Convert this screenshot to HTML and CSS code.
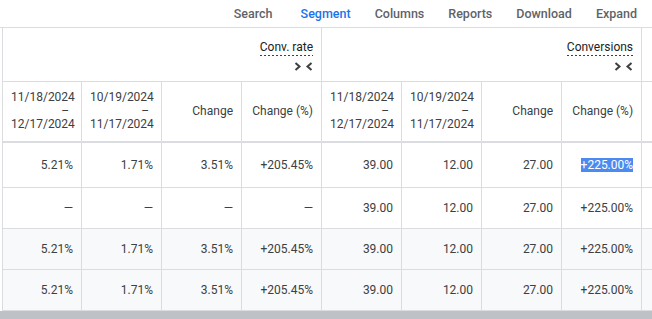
FILE: index.html
```html
<!DOCTYPE html>
<html lang="en">
<head>
    <meta charset="UTF-8">
    <meta name="viewport" content="width=device-width, initial-scale=1.0">
    <title>Report</title>
    <link rel="stylesheet" href="styles.css">
</head>
<body>
    <div class="toolbar">
        <a href="javascript:''" class="first">Search</a>
        <a href="javascript:''" class="active">Segment</a>
        <a href="javascript:''">Columns</a>
        <a href="javascript:''">Reports</a>
        <a href="javascript:''">Download</a>
        <a href="javascript:''">Expand</a>
    </div>

    <div class="grid_wrap">
        <table class="grid">
            <colgroup>
                <col class="c_first">
                <col class="c_num"><col class="c_num"><col class="c_num">
                <col class="c_num"><col class="c_num"><col class="c_num"><col class="c_num">
                <col class="c_rest">
            </colgroup>
            <thead>
                <tr class="group_row">
                    <th colspan="4">
                        <span class="metric">Conv. rate</span>
                        <span class="collapse">
                            <svg width="19" height="9" viewBox="0 0 19 9"><path d="M1.5 1l4 3.5-4 3.5M17.5 1l-4 3.5 4 3.5" fill="none" stroke="#3c4043" stroke-width="2"/></svg>
                        </span>
                    </th>
                    <th colspan="4">
                        <span class="metric">Conversions</span>
                        <span class="collapse">
                            <svg width="19" height="9" viewBox="0 0 19 9"><path d="M1.5 1l4 3.5-4 3.5M17.5 1l-4 3.5 4 3.5" fill="none" stroke="#3c4043" stroke-width="2"/></svg>
                        </span>
                    </th>
                    <th></th>
                </tr>
                <tr class="sub_row">
                    <th>11/18/2024<span class="dash">–</span>12/17/2024</th>
                    <th>10/19/2024<span class="dash">–</span>11/17/2024</th>
                    <th>Change</th>
                    <th>Change (%)</th>
                    <th>11/18/2024<span class="dash">–</span>12/17/2024</th>
                    <th>10/19/2024<span class="dash">–</span>11/17/2024</th>
                    <th>Change</th>
                    <th>Change (%)</th>
                    <th></th>
                </tr>
            </thead>
            <tbody>
                <tr class="first">
                    <td>5.21%</td><td>1.71%</td><td>3.51%</td><td>+205.45%</td>
                    <td>39.00</td><td>12.00</td><td>27.00</td><td><span class="selected">+225.00%</span></td>
                    <td></td>
                </tr>
                <tr>
                    <td>—</td><td>—</td><td>—</td><td>—</td>
                    <td>39.00</td><td>12.00</td><td>27.00</td><td>+225.00%</td>
                    <td></td>
                </tr>
                <tr class="total">
                    <td>5.21%</td><td>1.71%</td><td>3.51%</td><td>+205.45%</td>
                    <td>39.00</td><td>12.00</td><td>27.00</td><td>+225.00%</td>
                    <td></td>
                </tr>
                <tr class="total">
                    <td>5.21%</td><td>1.71%</td><td>3.51%</td><td>+205.45%</td>
                    <td>39.00</td><td>12.00</td><td>27.00</td><td>+225.00%</td>
                    <td></td>
                </tr>
            </tbody>
        </table>
    </div>

    <div class="scrollbar"></div>
</body>
</html>
```

FILE: styles.css
```css
*{
    padding: 0;
    margin: 0;
    box-sizing: border-box;
}
a,
a:hover,
a:active{
    text-decoration: none;
}
body{
    width: 652px;
    font-family: Roboto, "Liberation Sans", Arial, sans-serif;
    color: #3c4043;
    background-color: #fff;
    overflow: hidden;
}

/* toolbar */
.toolbar{
    height: 27px;
    display: flex;
    justify-content: flex-end;
    align-items: center;
    gap: 24px;
    padding-right: 15px;
}
.toolbar a{
    font-size: 12.5px;
    font-weight: 500;
    color: #5f6368;
}
.toolbar a.first{
    margin-right: 4px;
}
.toolbar a.active{
    color: #1a73e8;
}

/* table */
.grid_wrap{
    border-top: 1px solid #dadce0;
    padding-left: 2px;
    overflow: hidden;
}
.grid{
    table-layout: fixed;
    width: 660px;
    border-collapse: separate;
    border-spacing: 0;
    border-left: 1px solid #dadce0;
    font-size: 12px;
}
.grid .c_first{
    width: 79px;
}
.grid .c_num{
    width: 80px;
}
.grid .c_rest{
    width: 21px;
}
.grid th,
.grid td{
    border-right: 1px solid #dadce0;
    border-bottom: 1px solid #dadce0;
    padding: 0 8px;
    text-align: right;
    vertical-align: middle;
    white-space: nowrap;
}
.grid th{
    font-weight: 400;
    color: #3c4043;
}

.group_row th{
    height: 54px;
    padding-top: 12px;
    vertical-align: top;
}
.group_row .metric{
    display: inline-block;
    color: #202124;
    line-height: 14px;
    padding-bottom: 2px;
    background-image: linear-gradient(to right, #3c4043 60%, transparent 60%);
    background-size: 4px 1px;
    background-repeat: repeat-x;
    background-position: left bottom;
}
.group_row .collapse{
    display: block;
    height: 12px;
    margin-top: 4px;
}
.group_row .collapse svg{
    display: inline-block;
}

.sub_row th{
    height: 61px;
    border-bottom: 2px solid #dadce0;
    line-height: 13.5px;
}
.sub_row .dash{
    display: block;
    padding-right: 4px;
}

.grid td{
    height: 41px;
}
.grid tr.first td{
    height: 45px;
}
.grid tr.total td{
    background-color: #f8f9fa;
}
.selected{
    background-color: #4d8af0;
    color: #fff;
}

.scrollbar{
    height: 10px;
    background-color: #bec1c6;
}
```
